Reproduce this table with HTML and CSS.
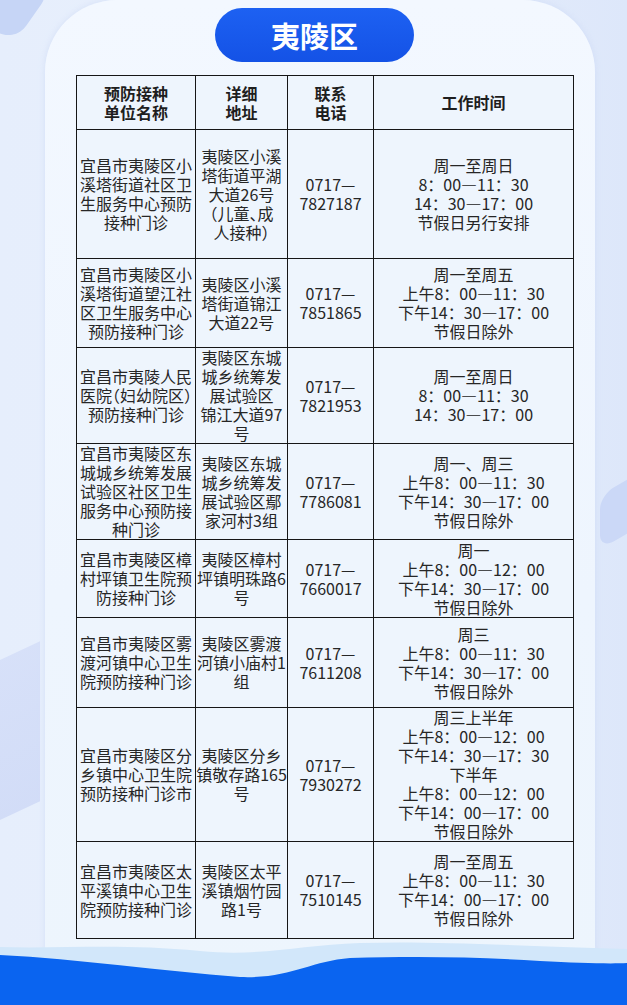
FILE: index.html
```html
<!DOCTYPE html>
<html lang="zh-CN">
<head>
<meta charset="utf-8">
<title>夷陵区</title>
<link rel="stylesheet" href="styles.css">
</head>
<body>
<div class="page">
  <div class="blob blob-tl"></div>
  <div class="blob blob-r"></div>
  <div class="blob blob-bl"></div>
  <div class="card">
    <div class="pill">夷陵区</div>
    <table class="grid">
      <colgroup>
        <col class="c1"><col class="c2"><col class="c3"><col class="c4">
      </colgroup>
      <tr class="r-h">
        <th>预防接种<br>单位名称</th>
        <th>详细<br>地址</th>
        <th>联系<br>电话</th>
        <th>工作时间</th>
      </tr>
      <tr class="r1">
        <td>宜昌市夷陵区小<br>溪塔街道社区卫<br>生服务中心预防<br>接种门诊</td>
        <td>夷陵区小溪<br>塔街道平湖<br>大道26号<br><span class="halt">（儿童、成</span><br>人接种<span class="halt">）</span></td>
        <td>0717—<br>7827187</td>
        <td>周一至周日<br>8：00—11：30<br>14：30—17：00<br>节假日另行安排</td>
      </tr>
      <tr class="r2">
        <td>宜昌市夷陵区小<br>溪塔街道望江社<br>区卫生服务中心<br>预防接种门诊</td>
        <td>夷陵区小溪<br>塔街道锦江<br>大道22号</td>
        <td>0717—<br>7851865</td>
        <td>周一至周五<br>上午8：00—11：30<br>下午14：30—17：00<br>节假日除外</td>
      </tr>
      <tr class="r3">
        <td>宜昌市夷陵人民<br><span class="halt">医院（妇幼院区）</span><br>预防接种门诊</td>
        <td>夷陵区东城<br>城乡统筹发<br>展试验区<br>锦江大道97<br>号</td>
        <td>0717—<br>7821953</td>
        <td>周一至周日<br>8：00—11：30<br>14：30—17：00</td>
      </tr>
      <tr class="r4">
        <td>宜昌市夷陵区东<br>城城乡统筹发展<br>试验区社区卫生<br>服务中心预防接<br>种门诊</td>
        <td>夷陵区东城<br>城乡统筹发<br>展试验区鄢<br>家河村3组</td>
        <td>0717—<br>7786081</td>
        <td>周一、周三<br>上午8：00—11：30<br>下午14：30—17：00<br>节假日除外</td>
      </tr>
      <tr class="r5">
        <td>宜昌市夷陵区樟<br>村坪镇卫生院预<br>防接种门诊</td>
        <td>夷陵区樟村<br>坪镇明珠路6<br>号</td>
        <td>0717—<br>7660017</td>
        <td>周一<br>上午8：00—12：00<br>下午14：30—17：00<br>节假日除外</td>
      </tr>
      <tr class="r6">
        <td>宜昌市夷陵区雾<br>渡河镇中心卫生<br>院预防接种门诊</td>
        <td>夷陵区雾渡<br>河镇小庙村1<br>组</td>
        <td>0717—<br>7611208</td>
        <td>周三<br>上午8：00—11：30<br>下午14：30—17：00<br>节假日除外</td>
      </tr>
      <tr class="r7">
        <td>宜昌市夷陵区分<br>乡镇中心卫生院<br>预防接种门诊市</td>
        <td>夷陵区分乡<br>镇敬存路165<br>号</td>
        <td>0717—<br>7930272</td>
        <td>周三上半年<br>上午8：00—12：00<br>下午14：30—17：30<br>下半年<br>上午8：00—12：00<br>下午14：00—17：00<br>节假日除外</td>
      </tr>
      <tr class="r8">
        <td>宜昌市夷陵区太<br>平溪镇中心卫生<br>院预防接种门诊</td>
        <td>夷陵区太平<br>溪镇烟竹园<br>路1号</td>
        <td>0717—<br>7510145</td>
        <td>周一至周五<br>上午8：00—11：30<br>下午14：00—17：00<br>节假日除外</td>
      </tr>
    </table>
  </div>
  <svg class="wave" width="627" height="70" viewBox="0 0 627 70" preserveAspectRatio="none">
    <path d="M0 12 C 60 14, 120 8, 200 16 C 260 22, 300 10, 360 8 C 430 6, 500 10, 627 14 L627 70 L0 70 Z" fill="#d2e7fa"/>
    <path d="M0 20 C 80 24, 160 36, 240 42 C 290 44, 310 26, 350 23 C 420 21, 480 22, 540 26 C 580 28, 610 29, 627 28 L627 70 L0 70 Z" fill="#0a64f0"/>
  </svg>
</div>
</body>
</html>
```
FILE: styles.css
```css
html, body {
  margin: 0;
  padding: 0;
}
body {
  width: 627px;
  height: 1005px;
  overflow: hidden;
  background: #dfe8fa;
  font-family: "Noto Sans CJK SC", "Microsoft YaHei", sans-serif;
}
.page {
  position: relative;
  width: 627px;
  height: 1005px;
  overflow: hidden;
  background: linear-gradient(90deg, #e6eefc 0%, #e9f0fc 50%, #dde7fa 100%);
}
.blob {
  position: absolute;
  background: #c6d5f6;
}
.blob-tl {
  left: -30px;
  top: -40px;
  width: 70px;
  height: 70px;
  border-radius: 22px;
  transform: rotate(35deg);
}
.blob-r {
  left: 600px;
  top: 478px;
  width: 60px;
  height: 54px;
  border-radius: 14px;
  transform: skewY(-30deg);
  background: #cbd8f7;
}
.blob-bl {
  left: -40px;
  top: 660px;
  width: 80px;
  height: 160px;
  background: linear-gradient(180deg, #d3ddf8 0%, #cdd8f6 100%);
  transform: skewY(-25deg);
  opacity: 0.8;
}
.card {
  position: relative;
  margin-left: 45px;
  width: 550px;
  height: 990px;
  padding-top: 8px;
  box-sizing: border-box;
  background: linear-gradient(180deg, #f3f8ff 0%, #eef5fe 60%, #edf5fd 100%);
  border-radius: 72px 72px 40px 40px;
  box-shadow: 0 0 6px rgba(200, 215, 245, 0.6);
}
.pill {
  margin-left: 170px;
  width: 199px;
  height: 54px;
  border-radius: 27px;
  background: linear-gradient(180deg, #1d61f2 0%, #1452e6 100%);
  color: #ffffff;
  font-size: 29px;
  font-weight: 700;
  line-height: 54px;
  text-align: center;
  letter-spacing: 0px;
}
.grid {
  margin-top: 13px;
  margin-left: 31px;
  width: 497px;
  table-layout: fixed;
  border-collapse: collapse;
  background: #eef5fd;
  color: #262626;
  font-size: 16px;
  line-height: 19px;
}
.c1 { width: 119px; }
.c2 { width: 92px; }
.c3 { width: 86px; }
.c4 { width: 200px; }
.grid th, .grid td {
  border: 1px solid #161616;
  padding: 0;
  text-align: center;
  vertical-align: middle;
  white-space: nowrap;
  overflow: visible;
}
.grid th {
  font-weight: 700;
  color: #1e1e1e;
}
.halt {
  font-feature-settings: "halt" 1;
}
.r-h { height: 54px; }
.r1 { height: 129px; }
.r2 { height: 89px; }
.r3 { height: 96px; }
.r4 { height: 96px; }
.r5 { height: 78px; }
.r6 { height: 90px; }
.r7 { height: 134px; }
.r8 { height: 97px; }
.wave {
  position: absolute;
  left: 0;
  bottom: 0;
  display: block;
}
```
